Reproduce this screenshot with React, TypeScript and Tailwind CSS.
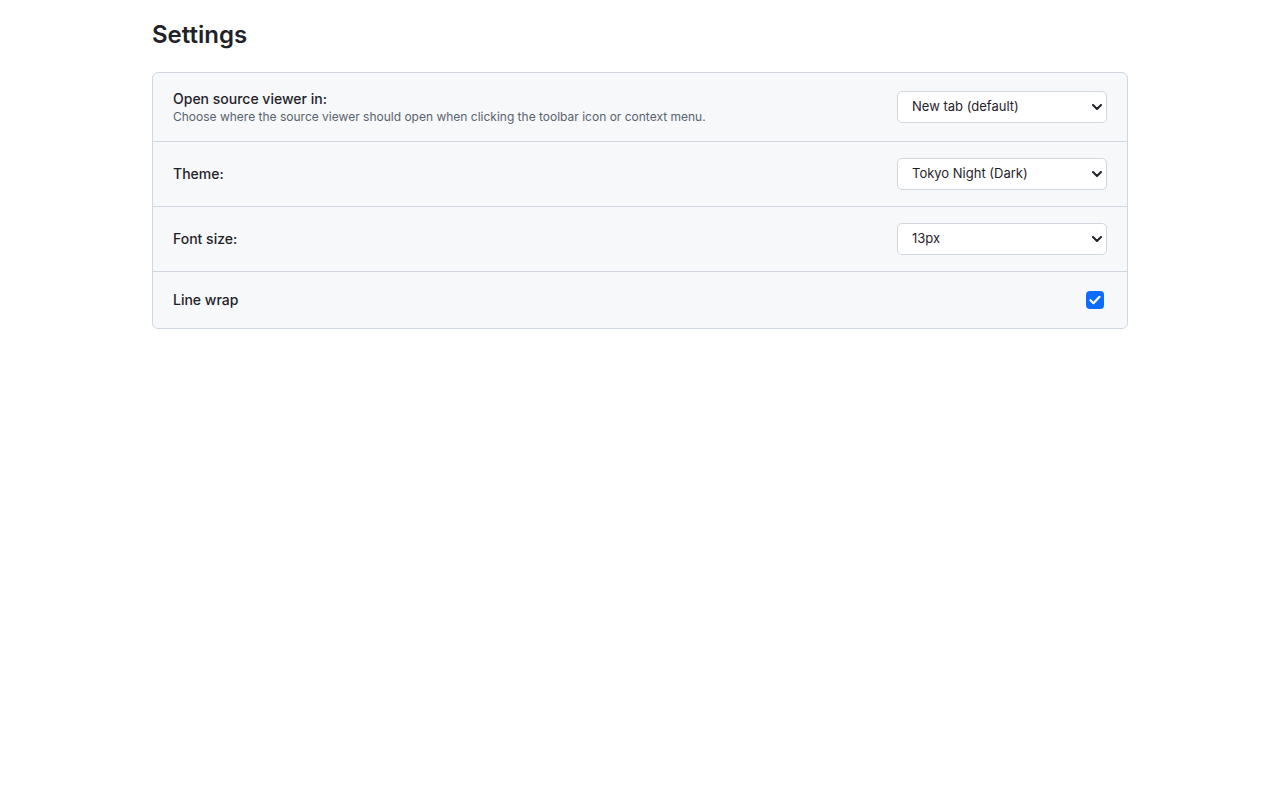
import { useState } from "react"

function Chevron() {
  return (
    <svg
      className="pointer-events-none absolute right-[5px] top-1/2 -translate-y-1/2"
      width="10"
      height="6"
      viewBox="0 0 10 6"
      fill="none"
    >
      <path d="M1 1l4 4 4-4" stroke="#1f2328" strokeWidth="2" strokeLinecap="round" strokeLinejoin="round" />
    </svg>
  )
}

function Select({ value, options }: { value: string; options: string[] }) {
  const [v, setV] = useState(value)
  return (
    <div className="relative w-[210px]">
      <select
        value={v}
        onChange={(e) => setV(e.target.value)}
        className="h-8 w-full appearance-none rounded-[5px] border border-[#d0d7de] bg-white pl-[14px] pr-6 text-[13px] text-[#1f2328] outline-none"
      >
        {options.map((o) => (
          <option key={o}>{o}</option>
        ))}
      </select>
      <Chevron />
    </div>
  )
}

export default function App() {
  const [wrap, setWrap] = useState(true)

  return (
    <div className="min-h-screen bg-white font-['Inter','Liberation_Sans',sans-serif] text-[#1f2328]">
      <div className="mx-auto w-[976px] pt-5">
        <h1 className="mb-[22px] text-2xl font-semibold leading-[30px]">Settings</h1>

        <div className="overflow-hidden rounded-md border border-[#d0d7de] bg-[#f6f8fa]">
          {/* Open in */}
          <div className="flex items-center justify-between border-b border-[#d0d7de] px-5 py-4">
            <div>
              <div className="text-sm font-medium leading-5">Open source viewer in:</div>
              <div className="text-xs leading-4 text-[#59636e]">
                Choose where the source viewer should open when clicking the toolbar icon or context menu.
              </div>
            </div>
            <Select value="New tab (default)" options={["New tab (default)", "Current tab", "New window"]} />
          </div>

          {/* Theme */}
          <div className="flex items-center justify-between border-b border-[#d0d7de] px-5 py-4">
            <div className="text-sm font-medium leading-5">Theme:</div>
            <Select
              value="Tokyo Night (Dark)"
              options={["Tokyo Night (Dark)", "GitHub (Light)", "GitHub (Dark)", "Monokai"]}
            />
          </div>

          {/* Font size */}
          <div className="flex items-center justify-between border-b border-[#d0d7de] px-5 py-4">
            <div className="text-sm font-medium leading-5">Font size:</div>
            <Select value="13px" options={["11px", "12px", "13px", "14px", "16px"]} />
          </div>

          {/* Line wrap */}
          <div className="flex items-center justify-between px-5 py-4">
            <div className="text-sm font-medium leading-6">Line wrap</div>
            <button
              type="button"
              onClick={() => setWrap(!wrap)}
              className={`mr-[3px] flex h-[18px] w-[18px] items-center justify-center rounded-[4px] ${
                wrap ? "bg-[#0b6cff]" : "border border-[#8c959f] bg-white"
              }`}
            >
              {wrap && (
                <svg width="12" height="10" viewBox="0 0 12 10" fill="none">
                  <path
                    d="M1.5 5.2l3 3L10.5 1.8"
                    stroke="white"
                    strokeWidth="2.2"
                    strokeLinecap="round"
                    strokeLinejoin="round"
                  />
                </svg>
              )}
            </button>
          </div>
        </div>
      </div>
    </div>
  )
}
